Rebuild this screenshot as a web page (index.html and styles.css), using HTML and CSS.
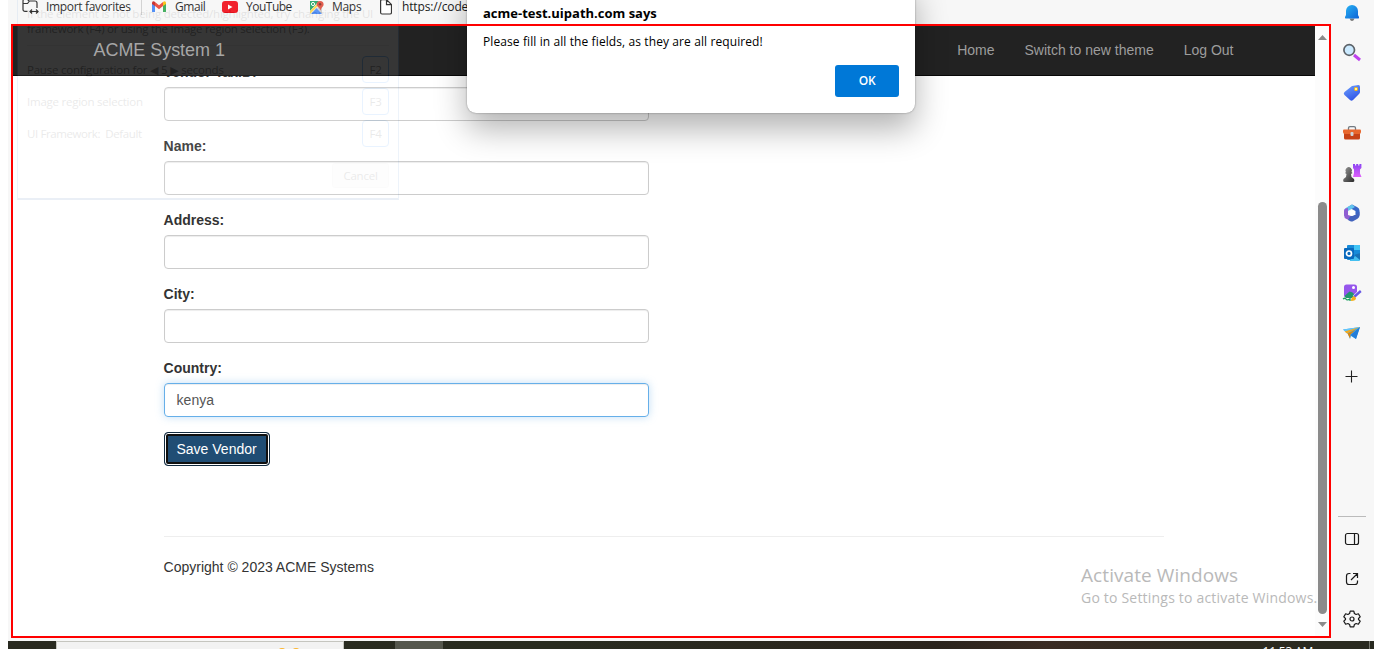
FILE: index.html
```html
<!DOCTYPE html>
<html lang="en">
<head>
<meta charset="utf-8">
<title>ACME System 1</title>
<link rel="stylesheet" href="styles.css">
</head>
<body>
<div class="screen">
  <div class="browser">
    <div class="main">
      <div class="bookmarks">
        <div class="bookmark bm-import">
          <svg width="17" height="16" viewBox="0 0 17 16" fill="none" stroke="#222" stroke-width="1.2"><path d="M5.500 12.400H3a2 2 0 0 1-2-2V2a2 2 0 0 1 2-2h2l2 2h6a2 2 0 0 1 2 2v5M1 4.500h4.500L7.500 2M8 12.500h8M10 10.500l-2 2 2 2M14 10.500l2 2-2 2"/></svg>
          <span>Import favorites</span>
        </div>
        <div class="divider"></div>
        <div class="bookmark bm-gmail">
          <svg width="14" height="12" viewBox="0 0 14 12"><path fill="#4285f4" d="M0 2v8.500Q0 11 .6 11H3V4z"/><path fill="#34a853" d="M11 4v7h2.400q.6 0 .6-.6V2z"/><path fill="#ea4335" d="M3 1l4 3.300L11 1v4L7 8.300 3 5z"/><path fill="#c5221f" d="M0 1.500Q1-.8 3 1v4L0 3z"/><path fill="#fbbc04" d="M14 1.500Q13-.8 11 1v4l3-2z"/></svg>
          <span>Gmail</span>
        </div>
        <div class="bookmark bm-youtube">
          <svg width="16" height="12" viewBox="0 0 16 12"><rect width="16" height="12" rx="3" fill="#f00c18"/><path d="M6 3.500v5l4.500-2.500z" fill="#fff"/></svg>
          <span>YouTube</span>
        </div>
        <div class="bookmark bm-maps">
          <svg width="16" height="15" viewBox="0 0 16 15"><path fill="#1fa463" d="M1 1h9L1 11z"/><path fill="#ccc" d="M8 8l5-4v10z"/><path fill="#fbd44b" d="M1 11L10 2v3L1 14z"/><path fill="#4c8bf5" d="M2 14l5.500-6 5.500 6z"/><circle cx="4" cy="4" r="1.600" fill="none" stroke="#fff"/><path fill="#de4e3d" d="M7.600 4.500a3.500 3.500 0 1 1 7 0c0 2-2 2.500-3 6-1.500-3.500-4-4-4-6z"/><circle cx="11" cy="4.200" r="1.200" fill="#7c2b22"/></svg>
          <span>Maps</span>
        </div>
        <div class="bookmark bm-code">
          <svg width="12" height="16" viewBox="0 0 12 16" fill="#fff" stroke="#222" stroke-width="1.200"><path d="M.6 2Q.6.600 2 .600h4.500l5 5V13.500q0 1.500-1.500 1.500H2Q.6 15 .6 13.500zM6.500.600V5.600h5"/></svg>
          <span>https://code</span>
        </div>
      </div>
      <div class="frame">
        <div class="page">
          <div class="navbar">
            <div class="brand">ACME System 1</div>
            <div class="links"><span>Home</span><span>Switch to new theme</span><span>Log Out</span></div>
          </div>
          <div class="content">
            <div class="group"><div class="label">Vendor TaxID:</div><div class="input"></div></div>
            <div class="group"><div class="label">Name:</div><div class="input"></div></div>
            <div class="group"><div class="label">Address:</div><div class="input"></div></div>
            <div class="group"><div class="label">City:</div><div class="input"></div></div>
            <div class="group"><div class="label">Country:</div><div class="input focused">kenya</div></div>
            <div class="save">Save Vendor</div>
            <div class="footer">Copyright © 2023 ACME Systems</div>
          </div>
        </div>
        <div class="scrollbar">
          <svg width="9" height="5" viewBox="0 0 9 5"><path d="M0 5l4.500-5L9 5z" fill="#8a8a8a"/></svg>
          <div class="thumb"></div>
          <svg width="9" height="5" viewBox="0 0 9 5"><path d="M0 0l4.500 5L9 0z" fill="#8a8a8a"/></svg>
        </div>
      </div>
    </div>
    <div class="sidebar">
      <svg width="20" height="20" viewBox="0 0 20 20"><defs><linearGradient id="bell" x2="1" y2="1"><stop stop-color="#27b4f4"/><stop offset="1" stop-color="#0f62d6"/></linearGradient><linearGradient id="tag" x2="0.500" y2="1"><stop stop-color="#6fa3ff"/><stop offset="1" stop-color="#3257e6"/></linearGradient><linearGradient id="rook" x2="0" y2="1"><stop stop-color="#8b45f2"/><stop offset="1" stop-color="#df5dfc"/></linearGradient><linearGradient id="pawn" x2="1" y2="1"><stop stop-color="#999"/><stop offset="1" stop-color="#292929"/></linearGradient></defs><path fill="#777" d="M7.500 15.500h5q-1 2.500-2.500 2.500t-2.500-2.500z"/><path fill="url(#bell)" d="M4 8a6 6 0 0 1 12 0v4l1 2q.5 1.500-1 1.500H4q-1.500 0-1-1.500l1-2z"/></svg>
      <svg width="20" height="20" viewBox="0 0 20 20"><path d="M12 12l6 5" stroke="#bd42ee" stroke-width="3"/><circle cx="7.200" cy="7" r="5.300" fill="#cbeaff" stroke="#5c6268" stroke-width="1.700"/></svg>
      <svg width="20" height="20" viewBox="0 0 20 20"><path fill="url(#tag)" d="M10 3l6.500-1Q18 2 18 4v5q0 1-1 2l-6 6q-1.500 1.500-3 0L2.500 12q-1.500-1.500 0-3z"/><circle cx="14" cy="6" r="1.700" fill="#fff4a0" stroke="#f2b51c"/></svg>
      <svg width="20" height="20" viewBox="0 0 20 20"><path d="M6.500 7V5q0-1.300 1.500-1.300h4q1.500 0 1.500 1.300v2" fill="none" stroke="#717981" stroke-width="1.300"/><path fill="#c74317" d="M2 10h16v5q0 1.500-1.500 1.500h-13Q2 16.500 2 15z"/><path fill="#e8672d" d="M2 6.500h16q1 0 1 1V9q0 2-2 2H3q-2 0-2-2V7.500q0-1 1-1z"/><rect x="8.500" y="9" width="3" height="4" rx="1" fill="#cfd6da"/></svg>
      <svg width="20" height="20" viewBox="0 0 20 20"><path fill="url(#rook)" d="M11 1h2v1.500h1.200V1h2v1.500h1.200V1h2v4L18 6.500v4l1.500 3.500H11l1-4V6.500L11 5z"/><path fill="url(#pawn)" d="M4 9a3.200 3.200 0 1 1 5.500 0l1 1-1.500 1 .5 3 2.500 2q1 3-1 3H2.500q-2 0-1-3l2.500-2 .5-3-1.500-1z"/></svg>
      <svg width="20" height="20" viewBox="0 0 20 20"><path fill="#3867c8" d="M10 1.500l5 2.500q2.500 1 2.500 3.500v5l-4-1V8L6 4z"/><path fill="#62c4ee" d="M10 1.500L4.500 4.500Q2 6 2 8.500V13l4-1V8l7-4z"/><path fill="#8f5ed2" d="M2 8v4q0 3 2.500 4l4.500 2 3-4-6-2V5Q2 5 2 8z"/><path fill="#4263bd" d="M8 13.500l5.500-1.700 4-3.300v4q0 2-2 3.300L11 18.300q-1.500.7-3-.3l-2-1z"/><path d="M7.500 8.500L10 7l3 1.500v3L10 13l-2.500-1.500z" fill="#fff"/></svg>
      <svg width="20" height="20" viewBox="0 0 20 20"><rect x="5" y="2" width="13" height="15" rx="1" fill="#178bd9"/><path d="M12 2h6v5h-6z" fill="#42c4f5"/><path d="M8 17l10-7v7q0 1-1 1H8z" fill="#44bff0"/><path d="M12 12l6 5V10z" fill="#1771b7"/><rect x="2" y="5" width="10" height="11" rx="1" fill="#0969bd"/><circle cx="7" cy="10.500" r="2.500" fill="none" stroke="#fff" stroke-width="1.700"/></svg>
      <svg width="20" height="20" viewBox="0 0 20 20"><rect x="2" y="1.500" width="13" height="13" rx="2.500" fill="#9656ec"/><path d="M2.500 13l5-4.500 3 1L14 13l-2 2H4z" fill="#20966d"/><circle cx="11.500" cy="4.500" r="1.500" fill="#fff"/><path d="M1 16q2-1.500 3 0 1 2 4-.3v2.300" fill="none" stroke="#1b9f5d" stroke-width="1.300"/><path d="M12 14l6.500-6" stroke="#f7f7f7" stroke-width="3.600"/><path d="M12 14l6.800-6" stroke="#6657e5" stroke-width="2.400"/><path d="M9 18q0-4 3-5l2 2q0 3-5 3z" fill="#f5af1b"/></svg>
      <svg width="20" height="20" viewBox="0 0 20 20"><path fill="#3babf2" d="M1 6.500L18 4l-4 12-5-3-1 3-2-5z"/><path fill="#64c6fb" d="M1 6.500L18 4 4 9z"/><path fill="#f2aa20" d="M2.500 8.500L18 4 5 10.500z"/><path fill="#d98711" d="M14 6.500L5.500 10.500l2.500 5 .5-4z"/><path fill="#237dd8" d="M18 4l-9.500 8L14 16z"/></svg>
      <svg class="plus" width="20" height="20" viewBox="0 0 20 20"><path d="M9.500 3.500v12M3.500 9.500h12" stroke="#222" stroke-width="1.100"/></svg>
      <div class="spacer"></div>
      <div class="rule"></div>
      <svg width="20" height="20" viewBox="0 0 20 20" fill="none" stroke="#1b1b1b" stroke-width="1.200"><rect x="3.500" y="4.500" width="13" height="11" rx="2"/><path d="M12.500 4.500v11"/></svg>
      <svg width="20" height="20" viewBox="0 0 20 20" fill="none" stroke="#1b1b1b" stroke-width="1.200"><path d="M8.500 4.500H7Q4.500 4.500 4.500 7v6Q4.500 15.500 7 15.500h6q2.500 0 2.500-2.500v-1.500M11 4.500h4.500V9M15.500 4.500L9 11"/></svg>
      <svg width="20" height="20" viewBox="0 0 20 20" fill="none" stroke="#1b1b1b" stroke-width="1.200" stroke-linejoin="round"><path d="M8.200 2.200h3.600l.6 2.300 1.700 1 2.300-.7 1.800 3.100-1.700 1.600v1.000l1.700 1.600-1.800 3.100-2.300-.7-1.700 1-.6 2.300H8.200l-.6-2.300-1.700-1-2.300.7-1.800-3.100 1.700-1.600v-1L1.800 7.900l1.800-3.100 2.300.7 1.700-1z"/><circle cx="10" cy="10" r="2"/></svg>
    </div>
  </div>
  <div class="taskbar">
    <div class="search"><i></i><i></i></div>
    <div class="task"></div>
    <div class="clock">11:53 AM</div>
    <div class="edge"></div>
  </div>

  <div class="watermark"><div class="wm-title">Activate Windows</div><div class="wm-text">Go to Settings to activate Windows.</div></div>

  <div class="ghost">
    <div class="hint"><div class="h1">If the element is not being detected/highlighted, try changing the UI</div><div class="h2">framework (F4) or using the Image region selection (F3).</div></div>
    <div class="ghost-rows">
      <div class="ghost-row"><span class="g1">Pause configuration for <b>◀</b> 5 <b>▶</b> seconds</span><span class="key">F2</span></div>
      <div class="ghost-row"><span class="g2">Image region selection</span><span class="key">F3</span></div>
      <div class="ghost-row"><span class="g3">UI Framework:&nbsp; Default</span><span class="key">F4</span></div>
    </div>
    <div class="cancel">Cancel</div>
  </div>

  <div class="dialog">
    <div class="dialog-title">acme-test.uipath.com says</div>
    <div class="dialog-text">Please fill in all the fields, as they are all required!</div>
    <div class="ok">OK</div>
  </div>
  <div class="dialog-line"></div>
</div>
</body>
</html>
```

FILE: styles.css
```css
* { box-sizing: border-box; }
body { margin: 0; background: #fff; font-family: "Open Sans", "Noto Sans", sans-serif; }
svg { display: block; flex: none; }
.screen { position: relative; width: 1366px; height: 649px; margin-left: 8px; overflow: hidden; background: #f7f7f7; }
.browser { display: flex; height: 641px; isolation: isolate; }
.main { width: 1323px; flex: none; }

.bookmarks { display: flex; height: 24px; padding-left: 14px; font-size: 12px; color: #1a1a1a; }
.bookmark { display: flex; gap: 7px; height: 14px; align-items: center; white-space: nowrap; flex: none; }
.bookmark span { line-height: 14px; }
.bm-import { width: 119px; }
.bm-import span { letter-spacing: -0.33px; }
.divider { width: 1px; height: 15px; background: #cfcfcf; margin-right: 10px; }
.bm-gmail { width: 70px; gap: 9px; letter-spacing: -0.45px; }
.bm-youtube { width: 87px; gap: 8px; letter-spacing: -0.5px; }
.bm-maps { width: 71px; gap: 7px; letter-spacing: -0.3px; }
.bm-code { gap: 10px; letter-spacing: -0.15px; }

.frame { display: flex; width: 1320px; height: 614px; margin-left: 3px; border: 2px solid red; background: #fff; }
.page { width: 1302px; font-family: "Liberation Sans", Arial, sans-serif; font-size: 14px; line-height: 20px; color: #333; }
.navbar { position: relative; z-index: 1; display: flex; justify-content: space-between; height: 50px; padding: 0 81.500px 0 80.500px; background: #222; border-bottom: 1px solid #080808; color: #9d9d9d; line-height: 48px; }
.brand { font-size: 18px; letter-spacing: -0.05px; }
.links { display: flex; gap: 30px; }
.content { width: 1151px; margin-top: -14px; padding-left: 150.600px; }
.group { width: 485px; height: 74px; }
.label { height: 25px; font-weight: 700; }
.input { height: 34px; padding: 6px 12px; border: 1px solid #ccc; border-radius: 4px; box-shadow: inset 0 1px 1px rgba(0,0,0,.075); color: #555; }
.input.focused { border-color: #66afe9; box-shadow: inset 0 1px 1px rgba(0,0,0,.075), 0 0 8px rgba(102,175,233,.4); }
.save { width: 106px; height: 34px; border: 1px solid #122b40; border-radius: 4px; background: #204d74; color: #fff; text-align: center; line-height: 32px; box-shadow: inset 0 0 0 1px #fff, inset 0 0 0 3px #101010; }
.footer { width: 1000px; margin-top: 70px; padding-top: 20px; border-top: 1px solid #eee; }

.scrollbar { width: 14px; display: flex; flex-direction: column; align-items: center; padding: 9px 0; background: #fcfcfc; }
.thumb { width: 9px; height: 412px; margin: 162px 0 8px; border-radius: 5px; background: #8b8b8b; }

.sidebar { flex: 1; display: flex; flex-direction: column; align-items: center; gap: 20px; padding: 3px 1px 12px 0; }
.sidebar .plus { margin-top: 4px; }
.spacer { flex: 1; }
.rule { width: 28px; height: 1px; background: #bbb; margin-bottom: -8px; }

.taskbar { display: flex; height: 8px; overflow: hidden; background: linear-gradient(90deg, #292a20 0%, #292c20 40%, #2b241d 68%, #3a2b23 76%, #2e2a20 88%, #292a20 100%); }
.search { display: flex; gap: 6px; width: 288px; margin-left: 48px; padding: 6px 0 0 221px; background: #f2f2f2; border: 1px solid #c5c5bf; border-bottom: 0; }
.search i { width: 8px; height: 5px; border-radius: 4px 4px 0 0; background: #fbb530; }
.task { width: 48px; margin-left: 51px; background: #55574d; }
.clock { margin-left: auto; color: #fff; font-size: 12px; line-height: 16px; padding-top: 3px; letter-spacing: -0.2px; white-space: nowrap; }
.edge { width: 1px; margin: 0 4px 0 56px; background: #77786f; }

.watermark { position: absolute; left: 1073px; top: 562px; color: #b9b9b9; white-space: nowrap; }
.wm-title { font-size: 19px; line-height: 26px; letter-spacing: 0.08px; }
.wm-text { font-size: 14px; line-height: 20px; letter-spacing: 0.2px; }

.ghost { position: absolute; left: 9px; top: 0; width: 382px; height: 200px; padding: 6px 9px 0; opacity: .09; background: #fff; border: 1px solid #4987cf; border-top: 0; border-bottom: 2px solid #235ca8; font-size: 11.500px; letter-spacing: -0.22px; color: #222; }
.hint { height: 40px; line-height: 15px; white-space: nowrap; border-bottom: 1px solid #ddd; }
.h2 { letter-spacing: -0.26px; }
.ghost-rows { display: flex; flex-direction: column; gap: 5px; margin-top: 10px; }
.ghost-row { display: flex; justify-content: space-between; align-items: center; height: 27px; white-space: nowrap; }
.g2 { letter-spacing: -0.24px; }
.g3 { letter-spacing: -0.4px; }
.ghost b { font-family: "DejaVu Sans", sans-serif; font-weight: 400; font-size: 11px; line-height: 10px; }
.key { width: 27px; height: 27px; border: 1px solid #1685ff; border-radius: 4px; text-align: center; line-height: 25px; }
.cancel { width: 57px; height: 25px; margin: 16px 0 0 auto; border: 1px solid #ddd; border-radius: 3px; background: #eee; text-align: center; line-height: 23px; }

.dialog { position: absolute; left: 459px; top: -20px; width: 448px; height: 133px; padding: 24px 16px 16px; border-radius: 9px; background: #fff; box-shadow: 0 0 2px rgba(0,0,0,.4), 0 16px 32px rgba(0,0,0,.3); font-size: 12px; color: #000; white-space: nowrap; }
.dialog-title { font-weight: 700; font-size: 13px; line-height: 18px; }
.dialog-text { margin-top: 12px; line-height: 16px; letter-spacing: 0.1px; }
.ok { width: 64px; height: 32px; margin: 15px 0 0 auto; border-radius: 3px; background: #0078d7; color: #fff; font-weight: 600; letter-spacing: -0.3px; text-align: center; line-height: 32px; }
.dialog-line { position: absolute; left: 3px; top: 24px; width: 1320px; height: 2px; background: red; }
```
